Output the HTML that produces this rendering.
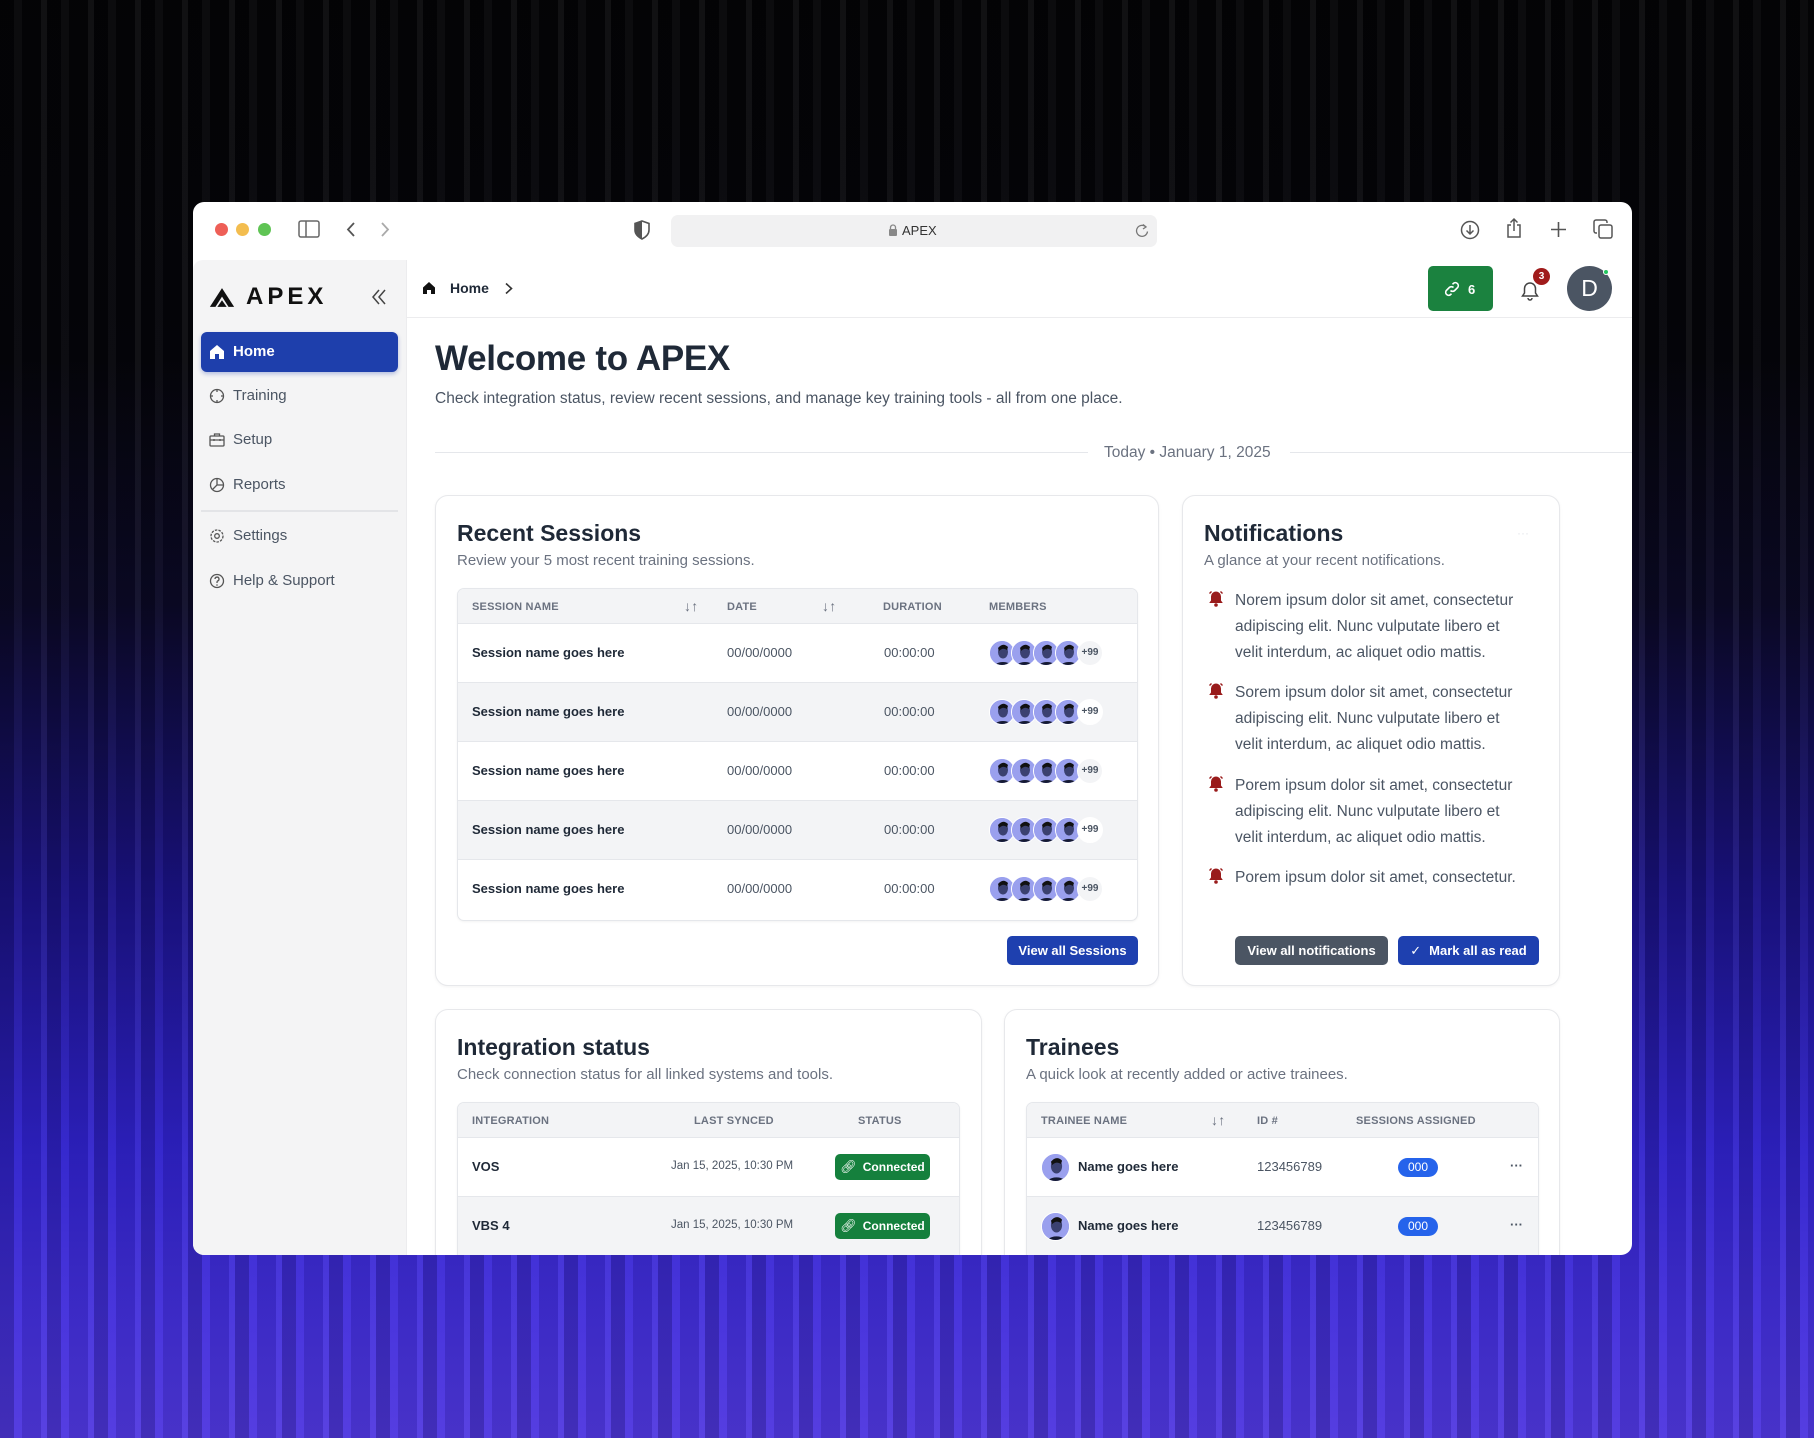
<!DOCTYPE html>
<html><head><meta charset="utf-8">
<style>
*{box-sizing:border-box;margin:0;padding:0}
html,body{width:1814px;height:1438px;overflow:hidden}
body{font-family:"Liberation Sans",sans-serif;position:relative;
background:
repeating-linear-gradient(90deg,rgba(0,0,0,0.18) 0 14px,rgba(255,255,255,0.03) 14px 22px,rgba(0,0,0,0.1) 22px 41px,rgba(255,255,255,0.05) 41px 47px),
linear-gradient(180deg,#040406 0%,#05050a 25%,#0b0926 42%,#1a1285 62%,#3022cc 80%,#4430dc 92%,#5038e0 100%);}
.abs{position:absolute}
.win{position:absolute;left:193px;top:202px;width:1439px;height:1053px;background:#fff;border-radius:11px;overflow:hidden}
.side{position:absolute;left:0;top:58px;width:214px;bottom:0;background:#f4f4f5;border-top-left-radius:10px;border-right:1px solid #ececee}
.nav{position:absolute;left:16px;font-size:15px;color:#4b5563;display:flex;align-items:center;gap:8px}
.nav svg{width:16px;height:16px}
.card{position:absolute;background:#fff;border:1px solid #e7e8eb;border-radius:13px;box-shadow:0 1px 3px rgba(0,0,0,0.05)}
.ct{position:absolute;font-size:23px;font-weight:bold;color:#1f2937}
.cs{position:absolute;font-size:15px;color:#6b7280}
.tbl{position:absolute;border:1px solid #e5e7eb;border-radius:7px;overflow:hidden;background:#fff;box-shadow:0 1px 2px rgba(0,0,0,0.05)}
.th{position:absolute;left:0;right:0;top:0;height:35px;background:#f3f4f6;border-bottom:1px solid #e5e7eb}
.th span{position:absolute;top:12px;font-size:11px;font-weight:bold;color:#6b7280;letter-spacing:0.2px}
.row{position:absolute;left:0;right:0;height:59px;border-bottom:1px solid #e5e7eb}
.row.g{background:#f3f4f6}
.row span{position:absolute;top:21px;font-size:13px;color:#4b5563}
.row b{position:absolute;top:21px;font-size:13px;color:#1f2937}
.av{position:absolute;top:16px;width:26px;height:26px;border-radius:50%;border:1px solid #fff;overflow:hidden;background:#8f96ea}
.plus{position:absolute;top:16px;width:26px;height:26px;border-radius:50%;background:#f3f4f6;border:1px solid #fff;font-size:10px;color:#4b5563;text-align:center;line-height:24px;font-weight:bold}
.btn{position:absolute;height:29px;border-radius:5px;color:#fff;font-size:13px;font-weight:bold;text-align:center;line-height:29px}
.nt{position:absolute;left:52px;width:282px;font-size:15.5px;line-height:26px;color:#4b5563}
.bell{position:absolute;left:24px;width:18px;height:18px}
.conn{position:absolute;left:377px;top:16px;width:95px;height:26px;border-radius:5px;background:#15803d;color:#fff;font-size:12px;font-weight:bold;line-height:26px;text-align:center}
</style></head><body>
<svg width="0" height="0" style="position:absolute"><defs>
<g id="face"><circle cx="13" cy="13" r="13" fill="#9aa0ee"/><ellipse cx="13" cy="29" rx="11" ry="8" fill="#151a33"/><ellipse cx="13" cy="11" rx="5" ry="6.5" fill="#3b4170"/><path d="M8 7 Q13 1 18 6 L17 9 Q13 6 9 10Z" fill="#111"/></g>
<g id="nbell"><path d="M9 2.5a5 5 0 0 0-5 5v4l-1.8 2.5h13.6L14 11.5v-4a5 5 0 0 0-5-5z" fill="#991b1b"/><circle cx="9" cy="16" r="1.8" fill="#991b1b"/><path d="M2.5 4.5 L4.5 2.5 M15.5 4.5 L13.5 2.5" stroke="#991b1b" stroke-width="1.4"/></g>
</defs></svg>

<div class="win">
  <div class="abs" style="left:22px;top:21px;width:13px;height:13px;border-radius:50%;background:#ee5f57"></div>
  <div class="abs" style="left:43px;top:21px;width:13px;height:13px;border-radius:50%;background:#f3bd4f"></div>
  <div class="abs" style="left:65px;top:21px;width:13px;height:13px;border-radius:50%;background:#5fc454"></div>
  <svg class="abs" style="left:105px;top:18px" width="22" height="18" viewBox="0 0 22 18"><rect x="1" y="1" width="20" height="16" rx="2" fill="none" stroke="#666" stroke-width="1.5"/><line x1="8" y1="1" x2="8" y2="17" stroke="#666" stroke-width="1.5"/></svg>
  <svg class="abs" style="left:152px;top:19px" width="12" height="17"><path d="M9 2L3 8.5L9 15" fill="none" stroke="#555" stroke-width="1.8"/></svg>
  <svg class="abs" style="left:186px;top:19px" width="12" height="17"><path d="M3 2L9 8.5L3 15" fill="none" stroke="#aaa" stroke-width="1.8"/></svg>
  <svg class="abs" style="left:441px;top:18px" width="16" height="20"><path d="M8 1L15 3.5V10C15 14 12 17 8 19C4 17 1 14 1 10V3.5Z" fill="none" stroke="#555" stroke-width="1.6"/><path d="M8 1V19C4 17 1 14 1 10V3.5Z" fill="#555"/></svg>
  <div class="abs" style="left:478px;top:13px;width:486px;height:32px;background:#f1f1f2;border-radius:7px"></div>
  <svg class="abs" style="left:695px;top:22px" width="10" height="13"><rect x="1" y="5" width="8" height="7" rx="1" fill="#888"/><path d="M2.5 5V3.5a2.5 2.5 0 0 1 5 0V5" fill="none" stroke="#888" stroke-width="1.3"/></svg>
  <div class="abs" style="left:709px;top:21px;font-size:13px;color:#333">APEX</div>
  <svg class="abs" style="left:942px;top:21px" width="14" height="15"><path d="M11 4A5.5 5.5 0 1 0 12.5 8.5" fill="none" stroke="#777" stroke-width="1.3"/><path d="M8 1.5L11 4L8 6" fill="none" stroke="#777" stroke-width="1.3"/></svg>
  <svg class="abs" style="left:1267px;top:18px" width="20" height="20"><circle cx="10" cy="10" r="8.5" fill="none" stroke="#555" stroke-width="1.5"/><path d="M10 5V14M6.5 10.5L10 14L13.5 10.5" fill="none" stroke="#555" stroke-width="1.5"/></svg>
  <svg class="abs" style="left:1312px;top:15px" width="18" height="22"><path d="M6 8H3V20H15V8H12M9 14V2M5.5 5.5L9 2L12.5 5.5" fill="none" stroke="#555" stroke-width="1.5"/></svg>
  <svg class="abs" style="left:1357px;top:19px" width="17" height="17"><path d="M8.5 1V16M1 8.5H16" stroke="#555" stroke-width="1.6"/></svg>
  <svg class="abs" style="left:1400px;top:17px" width="20" height="20"><rect x="6" y="6" width="13" height="13" rx="2" fill="none" stroke="#555" stroke-width="1.5"/><path d="M4 14H3a2 2 0 0 1-2-2V3a2 2 0 0 1 2-2h9a2 2 0 0 1 2 2v1" fill="none" stroke="#555" stroke-width="1.5"/></svg>

  <div class="side">
    <svg class="abs" style="left:15px;top:25px" width="28" height="25" viewBox="0 0 30 26"><path d="M2 23L15 3L28 23H22L15 12L8 23Z" fill="#111"/><path d="M10 23L15 16L20 23Z" fill="#111"/></svg>
    <div class="abs" style="left:53px;top:23px;font-size:24px;font-weight:bold;letter-spacing:4px;color:#111">APEX</div>
    <svg class="abs" style="left:177px;top:28px" width="18" height="18"><path d="M9 2L3 9L9 16M15 2L9 9L15 16" fill="none" stroke="#444" stroke-width="1.5"/></svg>
    <div class="abs" style="left:8px;top:72px;width:197px;height:40px;background:#1e3fac;border-radius:6px;box-shadow:0 2px 4px rgba(30,63,172,0.3)"></div>
    <svg class="abs" style="left:16px;top:84px" width="16" height="16"><path d="M8 1L1 7V15H6V10H10V15H15V7Z" fill="#fff"/></svg>
    <div class="abs" style="left:40px;top:83px;font-size:15px;font-weight:bold;color:#fff">Home</div>
    <div class="nav" style="top:127px"><svg viewBox="0 0 16 16"><circle cx="8" cy="8" r="6.5" fill="none" stroke="#555" stroke-width="1.3"/><path d="M8 1.5V4M8 12V14.5M1.5 8H4M12 8H14.5" stroke="#555" stroke-width="1.3"/></svg>Training</div>
    <div class="nav" style="top:171px"><svg viewBox="0 0 16 16"><rect x="1" y="4" width="14" height="10" rx="1" fill="none" stroke="#555" stroke-width="1.3"/><path d="M5.5 4V2H10.5V4M1 8H15M5 7V9M11 7V9" fill="none" stroke="#555" stroke-width="1.3"/></svg>Setup</div>
    <div class="nav" style="top:216px"><svg viewBox="0 0 16 16"><circle cx="8" cy="8" r="6.5" fill="none" stroke="#555" stroke-width="1.3"/><path d="M8 1.5V8L3.5 12.5M8 8H14.5" fill="none" stroke="#555" stroke-width="1.3"/></svg>Reports</div>
    <div class="abs" style="left:8px;top:250px;width:197px;height:2px;background:#e3e4e7"></div>
    <div class="nav" style="top:267px"><svg viewBox="0 0 16 16"><circle cx="8" cy="8" r="2.3" fill="none" stroke="#555" stroke-width="1.3"/><circle cx="8" cy="8" r="6" fill="none" stroke="#555" stroke-width="1.3" stroke-dasharray="2.5 1.2"/></svg>Settings</div>
    <div class="nav" style="top:312px"><svg viewBox="0 0 16 16"><circle cx="8" cy="8" r="6.5" fill="none" stroke="#555" stroke-width="1.3"/><path d="M6 6a2 2 0 1 1 2.5 2C8 8.3 8 9 8 10" fill="none" stroke="#555" stroke-width="1.3"/><circle cx="8" cy="12" r="0.8" fill="#555"/></svg>Help &amp; Support</div>
  </div>

  <div class="abs" style="left:214px;right:0;top:115px;height:1px;background:#ececee"></div>
  <svg class="abs" style="left:229px;top:79px" width="14" height="14"><path d="M7 1L1 6.5V13H5V9H9V13H13V6.5Z" fill="#111"/></svg>
  <div class="abs" style="left:257px;top:78px;font-size:14px;font-weight:bold;color:#1f2937">Home</div>
  <svg class="abs" style="left:311px;top:80px" width="10" height="13"><path d="M2 1.5L7.5 6.5L2 11.5" fill="none" stroke="#333" stroke-width="1.6"/></svg>
  <div class="abs" style="left:1235px;top:64px;width:65px;height:45px;background:#1b823f;border-radius:5px"></div>
  <svg class="abs" style="left:1250px;top:79px" width="18" height="16" viewBox="0 0 18 16"><path d="M7.5 9.5a3 3 0 0 0 4.2 0l3-3a3 3 0 0 0-4.2-4.2l-1 1M10.5 6.5a3 3 0 0 0-4.2 0l-3 3a3 3 0 0 0 4.2 4.2l1-1" fill="none" stroke="#fff" stroke-width="1.6"/></svg>
  <div class="abs" style="left:1275px;top:80px;font-size:13px;font-weight:bold;color:#fff">6</div>
  <svg class="abs" style="left:1327px;top:78px" width="20" height="22"><path d="M10 3a5.5 5.5 0 0 0-5.5 5.5v4.5L2.5 16h15l-2-3V8.5A5.5 5.5 0 0 0 10 3z M8 18a2 2 0 0 0 4 0" fill="none" stroke="#444" stroke-width="1.5"/></svg>
  <div class="abs" style="left:1340px;top:66px;width:17px;height:17px;border-radius:50%;background:#a01b1b;color:#fff;font-size:10px;font-weight:bold;text-align:center;line-height:17px">3</div>
  <div class="abs" style="left:1374px;top:64px;width:45px;height:45px;border-radius:50%;background:#4b5563;color:#fff;font-size:23px;text-align:center;line-height:45px">D</div>
  <div class="abs" style="left:1410px;top:67px;width:6px;height:6px;border-radius:50%;background:#22c55e;border:1px solid #fff"></div>

  <div class="abs" style="left:242px;top:137px;font-size:35px;font-weight:bold;color:#1f2937;letter-spacing:-0.3px">Welcome to APEX</div>
  <div class="abs" style="left:242px;top:188px;font-size:15.5px;color:#4b5563">Check integration status, review recent sessions, and manage key training tools - all from one place.</div>
  <div class="abs" style="left:242px;top:250px;width:653px;height:1px;background:#e5e7eb"></div>
  <div class="abs" style="left:911px;top:242px;font-size:15.5px;color:#6b7280">Today • January 1, 2025</div>
  <div class="abs" style="left:1097px;right:0;top:250px;height:1px;background:#e5e7eb"></div>

  <div class="card" style="left:242px;top:293px;width:724px;height:491px">
    <div class="ct" style="left:21px;top:24px">Recent Sessions</div>
    <div class="cs" style="left:21px;top:56px">Review your 5 most recent training sessions.</div>
    <div class="tbl" style="left:21px;top:92px;width:681px;height:333px">
      <div class="th"><span style="left:14px">SESSION NAME</span><span style="left:226px;font-size:14px;top:9px;font-weight:normal">↓↑</span><span style="left:269px">DATE</span><span style="left:364px;font-size:14px;top:9px;font-weight:normal">↓↑</span><span style="left:425px">DURATION</span><span style="left:531px">MEMBERS</span></div>
      <div class="row" style="top:35px"><b style="left:14px">Session name goes here</b><span style="left:269px">00/00/0000</span><span style="left:426px">00:00:00</span>
        <div class="av" style="left:531px"><svg width="26" height="26"><use href="#face"/></svg></div><div class="av" style="left:553px"><svg width="26" height="26"><use href="#face"/></svg></div><div class="av" style="left:575px"><svg width="26" height="26"><use href="#face"/></svg></div><div class="av" style="left:597px"><svg width="26" height="26"><use href="#face"/></svg></div><div class="plus" style="left:619px">+99</div></div>
      <div class="row g" style="top:94px"><b style="left:14px">Session name goes here</b><span style="left:269px">00/00/0000</span><span style="left:426px">00:00:00</span>
        <div class="av" style="left:531px"><svg width="26" height="26"><use href="#face"/></svg></div><div class="av" style="left:553px"><svg width="26" height="26"><use href="#face"/></svg></div><div class="av" style="left:575px"><svg width="26" height="26"><use href="#face"/></svg></div><div class="av" style="left:597px"><svg width="26" height="26"><use href="#face"/></svg></div><div class="plus" style="left:619px;background:#fff">+99</div></div>
      <div class="row" style="top:153px"><b style="left:14px">Session name goes here</b><span style="left:269px">00/00/0000</span><span style="left:426px">00:00:00</span>
        <div class="av" style="left:531px"><svg width="26" height="26"><use href="#face"/></svg></div><div class="av" style="left:553px"><svg width="26" height="26"><use href="#face"/></svg></div><div class="av" style="left:575px"><svg width="26" height="26"><use href="#face"/></svg></div><div class="av" style="left:597px"><svg width="26" height="26"><use href="#face"/></svg></div><div class="plus" style="left:619px">+99</div></div>
      <div class="row g" style="top:212px"><b style="left:14px">Session name goes here</b><span style="left:269px">00/00/0000</span><span style="left:426px">00:00:00</span>
        <div class="av" style="left:531px"><svg width="26" height="26"><use href="#face"/></svg></div><div class="av" style="left:553px"><svg width="26" height="26"><use href="#face"/></svg></div><div class="av" style="left:575px"><svg width="26" height="26"><use href="#face"/></svg></div><div class="av" style="left:597px"><svg width="26" height="26"><use href="#face"/></svg></div><div class="plus" style="left:619px;background:#fff">+99</div></div>
      <div class="row" style="top:271px;border-bottom:none"><b style="left:14px">Session name goes here</b><span style="left:269px">00/00/0000</span><span style="left:426px">00:00:00</span>
        <div class="av" style="left:531px"><svg width="26" height="26"><use href="#face"/></svg></div><div class="av" style="left:553px"><svg width="26" height="26"><use href="#face"/></svg></div><div class="av" style="left:575px"><svg width="26" height="26"><use href="#face"/></svg></div><div class="av" style="left:597px"><svg width="26" height="26"><use href="#face"/></svg></div><div class="plus" style="left:619px">+99</div></div>
    </div>
    <div class="btn" style="left:571px;top:440px;width:131px;background:#1e40af">View all Sessions</div>
  </div>

  <div class="card" style="left:989px;top:293px;width:378px;height:491px">
    <div class="ct" style="left:21px;top:24px">Notifications</div>
    <div class="abs" style="left:334px;top:30px;color:#e5e7eb;font-size:12px">···</div>
    <div class="cs" style="left:21px;top:56px">A glance at your recent notifications.</div>
    <svg class="bell" style="top:93px"><use href="#nbell"/></svg>
    <div class="nt" style="top:92px">Norem ipsum dolor sit amet, consectetur adipiscing elit. Nunc vulputate libero et velit interdum, ac aliquet odio mattis.</div>
    <svg class="bell" style="top:185px"><use href="#nbell"/></svg>
    <div class="nt" style="top:184px">Sorem ipsum dolor sit amet, consectetur adipiscing elit. Nunc vulputate libero et velit interdum, ac aliquet odio mattis.</div>
    <svg class="bell" style="top:278px"><use href="#nbell"/></svg>
    <div class="nt" style="top:277px">Porem ipsum dolor sit amet, consectetur adipiscing elit. Nunc vulputate libero et velit interdum, ac aliquet odio mattis.</div>
    <svg class="bell" style="top:370px"><use href="#nbell"/></svg>
    <div class="nt" style="top:369px">Porem ipsum dolor sit amet, consectetur.</div>
    <div class="btn" style="left:52px;top:440px;width:153px;background:#4b5563">View all notifications</div>
    <div class="btn" style="left:215px;top:440px;width:141px;background:#1e40af"><span style="font-weight:normal;margin-right:8px">✓</span>Mark all as read</div>
  </div>

  <div class="card" style="left:242px;top:807px;width:547px;height:300px">
    <div class="ct" style="left:21px;top:24px">Integration status</div>
    <div class="cs" style="left:21px;top:56px">Check connection status for all linked systems and tools.</div>
    <div class="tbl" style="left:21px;top:92px;width:503px;height:200px">
      <div class="th"><span style="left:14px">INTEGRATION</span><span style="left:236px">LAST SYNCED</span><span style="left:400px">STATUS</span></div>
      <div class="row" style="top:35px"><b style="left:14px">VOS</b><span style="left:213px;font-size:11.5px;top:22px">Jan 15, 2025, 10:30 PM</span><div class="conn"><span style="position:static;font-weight:normal;color:#fff;margin-right:6px">🔗︎</span>Connected</div></div>
      <div class="row g" style="top:94px"><b style="left:14px">VBS 4</b><span style="left:213px;font-size:11.5px;top:22px">Jan 15, 2025, 10:30 PM</span><div class="conn"><span style="position:static;font-weight:normal;color:#fff;margin-right:6px">🔗︎</span>Connected</div></div>
    </div>
  </div>

  <div class="card" style="left:811px;top:807px;width:556px;height:300px">
    <div class="ct" style="left:21px;top:24px">Trainees</div>
    <div class="cs" style="left:21px;top:56px">A quick look at recently added or active trainees.</div>
    <div class="tbl" style="left:21px;top:92px;width:513px;height:200px">
      <div class="th"><span style="left:14px">TRAINEE NAME</span><span style="left:184px;font-size:14px;top:9px;font-weight:normal">↓↑</span><span style="left:230px">ID #</span><span style="left:329px">SESSIONS ASSIGNED</span></div>
      <div class="row" style="top:35px"><div class="av" style="left:14px;top:15px;width:29px;height:29px"><svg width="29" height="29" viewBox="0 0 26 26"><use href="#face"/></svg></div><b style="left:51px">Name goes here</b><span style="left:230px">123456789</span><div class="abs" style="left:371px;top:20px;width:40px;height:19px;border-radius:10px;background:#2563eb;color:#fff;font-size:12px;text-align:center;line-height:19px">000</div><span style="left:483px;top:20px;font-weight:bold">···</span></div>
      <div class="row g" style="top:94px"><div class="av" style="left:14px;top:15px;width:29px;height:29px"><svg width="29" height="29" viewBox="0 0 26 26"><use href="#face"/></svg></div><b style="left:51px">Name goes here</b><span style="left:230px">123456789</span><div class="abs" style="left:371px;top:20px;width:40px;height:19px;border-radius:10px;background:#2563eb;color:#fff;font-size:12px;text-align:center;line-height:19px">000</div><span style="left:483px;top:20px;font-weight:bold">···</span></div>
    </div>
  </div>
</div>
</body></html>
